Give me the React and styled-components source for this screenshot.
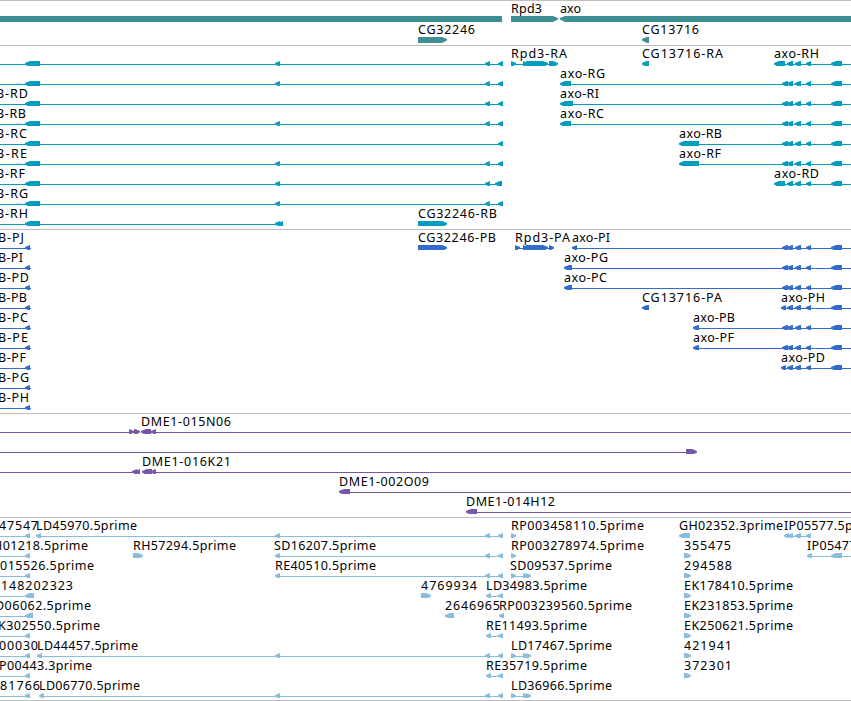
import React from 'react'
import styled, { createGlobalStyle } from 'styled-components'

const WIDTH = 851
const HEAD = 5
// features that run off either side of the view
const LEFT_EDGE = -10
const RIGHT_EDGE = 861

// dir, label, label x, label width, exons, optional [from, to] for the backbone
const f = (dir, label, x, width, exons, span) => ({ dir, label, x, width, exons, span })
const left = (label, x, width, exons, span) => f('left', label, x, width, exons, span)
const right = (label, x, width, exons, span) => f('right', label, x, width, exons, span)

const axoTail = [[787, 793], [795, 801], [806, 811], [831, 842]]
const axo = (label, x, width, first, mid = true) =>
    left(label, x, width, [first, ...(mid ? [[782, 788]] : []), ...axoTail], [first[0] + 2, RIGHT_EDGE])

const transcript = (label, width, exons) =>
    left(label, -4, width, [[25, 40], ...exons], [LEFT_EDGE, exons[exons.length - 1][1] - 1])
const A = [275, 280]
const B = [485, 490]
const C = [498, 503]

const protein = (label, width) => left(label, -2, width, [[25, 30]], [LEFT_EDGE, 31])
const est = (label, x, width, end = 30) => left(label, x, width, [[25, end]], [LEFT_EDGE, end - 1])
const rpdExons = [[511, 516], [523, 528], [526, 531]]

const tracks = [
    {
        name: 'genes',
        color: '#3f8e96',
        rowHeight: 21,
        pad: 2,
        rows: [
            [
                f('none', '', 0, 0, [[LEFT_EDGE, 502]]),
                right('Rpd3', 511, 31, [[511, 558]]),
                left('axo', 560, 21, [[560, RIGHT_EDGE]]),
            ],
            [
                right('CG32246', 418, 57, [[418, 447]]),
                left('CG13716', 642, 57, [[642, 649]]),
            ],
        ],
    },
    {
        name: 'transcripts',
        color: '#009dbf',
        rowHeight: 20,
        pad: 3,
        rows: [
            [
                transcript('', 0, [A, B, C]),
                right('Rpd3-RA', 511, 56, [[511, 516], [523, 528], [526, 548], [549, 558]]),
                left('CG13716-RA', 642, 81, [[642, 649]]),
                axo('axo-RH', 774, 45, [774, 785], false),
            ],
            [transcript('', 0, [A, B, C]), axo('axo-RG', 560, 45, [560, 571])],
            [transcript('B-RD', 32, [B, C]), axo('axo-RI', 560, 39, [560, 573])],
            [transcript('B-RB', 30, [A, B, C]), axo('axo-RC', 560, 44, [560, 571])],
            [transcript('B-RC', 31, [C]), axo('axo-RB', 679, 43, [679, 699])],
            [transcript('B-RE', 31, [A, B, C]), axo('axo-RF', 679, 42, [679, 699])],
            [transcript('B-RF', 29, [A, B, [495, 502]]), axo('axo-RD', 774, 45, [774, 785], false)],
            [transcript('B-RG', 32, [A, B, C])],
            [transcript('B-RH', 32, [A, [278, 283]]), right('CG32246-RB', 418, 79, [[418, 447]])],
        ],
    },
    {
        name: 'proteins',
        color: '#326ccc',
        rowHeight: 20,
        pad: 3,
        rows: [
            [
                protein('B-PJ', 26),
                right('CG32246-PB', 418, 78, [[418, 447]]),
                right('Rpd3-PA', 515, 55, [[515, 520], [523, 528], [526, 548], [549, 554]]),
                axo('axo-PI', 572, 38, [572, 577]),
            ],
            [protein('B-PI', 25), axo('axo-PG', 564, 44, [564, 572])],
            [protein('B-PD', 31), axo('axo-PC', 564, 43, [564, 572])],
            [
                protein('B-PB', 29),
                left('CG13716-PA', 642, 80, [[642, 649]]),
                axo('axo-PH', 781, 44, [781, 786], false),
            ],
            [protein('B-PC', 30), axo('axo-PB', 693, 42, [693, 699])],
            [protein('B-PE', 30), axo('axo-PF', 693, 41, [693, 699])],
            [protein('B-PF', 28), axo('axo-PD', 781, 44, [781, 786], false)],
            [protein('B-PG', 31)],
            [protein('B-PH', 31)],
        ],
    },
    {
        name: 'bacs',
        color: '#7758a6',
        rowHeight: 20,
        pad: 3,
        rows: [
            [
                right('', 0, 0, [[129, 134], [134, 140]], [LEFT_EDGE, 139]),
                left('DME1-015N06', 141, 90, [[141, 151], [151, 156]], [142, RIGHT_EDGE]),
            ],
            [right('', 0, 0, [[686, 697]], [LEFT_EDGE, 696])],
            [
                left('', 0, 0, [[132, 137], [135, 140]], [LEFT_EDGE, 139]),
                left('DME1-016K21', 142, 89, [[142, 152], [151, 156]], [143, RIGHT_EDGE]),
            ],
            [left('DME1-002O09', 339, 90, [[339, 350]], [341, RIGHT_EDGE])],
            [left('DME1-014H12', 466, 89, [[466, 477]], [468, RIGHT_EDGE])],
        ],
    },
    {
        name: 'ests',
        color: '#88bddd',
        rowHeight: 20,
        pad: 2,
        rows: [
            [
                est('47547', -1, 39),
                left('LD45970.5prime', 36, 101, [[36, 41], A, B, C]),
                right('RP003458110.5prime', 511, 133, [[511, 516]]),
                left('GH02352.3prime', 679, 104, [[679, 690]]),
                left('IP05577.5prime', 784, 97, [[784, 789], [788, 793], [795, 801], [806, 811]]),
            ],
            [
                est('H01218.5prime', -7, 95),
                right('RH57294.5prime', 133, 103, [[133, 143]]),
                left('SD16207.5prime', 274, 102, [A, B, C]),
                right('RP003278974.5prime', 511, 133, [[511, 516]]),
                right('355475', 684, 47, [[684, 691]]),
                left('IP05477.5prime', 807, 97, [[807, 812], [831, 842]], [808, RIGHT_EDGE]),
            ],
            [
                est('015526.5prime', 0, 94),
                left('RE40510.5prime', 275, 101, [A, B, C]),
                right('SD09537.5prime', 510, 102, rpdExons),
                right('294588', 684, 48, [[684, 691]]),
            ],
            [
                est('148202323', 1, 72, 34),
                right('4769934', 421, 56, [[421, 431]]),
                left('LD34983.5prime', 486, 101, [[486, 491], C]),
                right('EK178410.5prime', 684, 109, [[684, 691]]),
            ],
            [
                est('D06062.5prime', -5, 96, 33),
                left('2646965', 445, 55, [[445, 454]]),
                left('RP003239560.5prime', 499, 133, [[499, 504]]),
                right('EK231853.5prime', 684, 109, [[684, 691]]),
            ],
            [
                est('K302550.5prime', -2, 102),
                left('RE11493.5prime', 486, 101, [[486, 491], C]),
                right('EK250621.5prime', 684, 109, [[684, 691]]),
            ],
            [
                est('00030', -1, 39),
                left('LD44457.5prime', 37, 101, [[37, 42], A, B, C]),
                right('LD17467.5prime', 511, 101, rpdExons),
                right('421941', 684, 48, [[684, 691]]),
            ],
            [
                est('P00443.3prime', -1, 93),
                left('RE35719.5prime', 486, 101, [[486, 491], C]),
                right('372301', 684, 48, [[684, 691]]),
            ],
            [
                est('81766', 0, 40),
                left('LD06770.5prime', 39, 101, [[39, 44], A, B, C]),
                right('LD36966.5prime', 511, 101, rpdExons),
            ],
        ],
    },
]

function exonPoints(dir, [a, b]) {
    const head = Math.min(HEAD, b - a)
    if (dir === 'left') {
        return `${a},17 ${a + head},15 ${b},15 ${b},21 ${a + head},21 ${a},18.6`
    }
    if (dir === 'right') {
        return `${a},15 ${b - head},15 ${b},17 ${b},18.6 ${b - head},21 ${a},21`
    }
    return `${a},15 ${b},15 ${b},21 ${a},21`
}

function Feature({ dir, label, x, width, exons, span }) {
    const [from, to] = span || [exons[0][0] + 1, exons[exons.length - 1][1] - 1]
    return (
        <g>
            <Backbone x={from} y={18} width={to - from} height={1} />
            {exons.map(exon => (
                <Exon key={exon[0]} points={exonPoints(dir, exon)} />
            ))}
            {label && <Label x={x} y={12} textLength={width}>{label}</Label>}
        </g>
    )
}

export default function App() {
    return (
        <>
            <GlobalStyle />
            <Browser>
                {tracks.map(track => (
                    <Track key={track.name} $color={track.color} $pad={track.pad}>
                        {track.rows.map((row, i) => (
                            <Lane key={i} width={WIDTH} height={track.rowHeight}>
                                {row.map((feature, j) => (
                                    <Feature key={j} {...feature} />
                                ))}
                            </Lane>
                        ))}
                    </Track>
                ))}
            </Browser>
        </>
    )
}

const GlobalStyle = createGlobalStyle`
    body{
        margin: 0;
        background-color: #ffffff;
        overflow: hidden;
    }
`
const Browser = styled.main`
    display: flex;
    flex-direction: column;
    width: ${WIDTH}px;
    border-bottom: 1px solid #bebebe;
`
const Track = styled.section`
    display: flex;
    flex-direction: column;
    border-top: 1px solid #bebebe;
    padding-bottom: ${props => props.$pad}px;
    color: ${props => props.$color};
`
const Lane = styled.svg`
    display: block;
    flex: none;
    overflow: hidden;
`
const Backbone = styled.rect`
    fill: currentColor;
    shape-rendering: crispEdges;
`
const Exon = styled.polygon`
    fill: currentColor;
`
const Label = styled.text`
    fill: #000000;
    font-family: 'Noto Sans', 'DejaVu Sans', sans-serif;
    font-size: 12.5px;
`
